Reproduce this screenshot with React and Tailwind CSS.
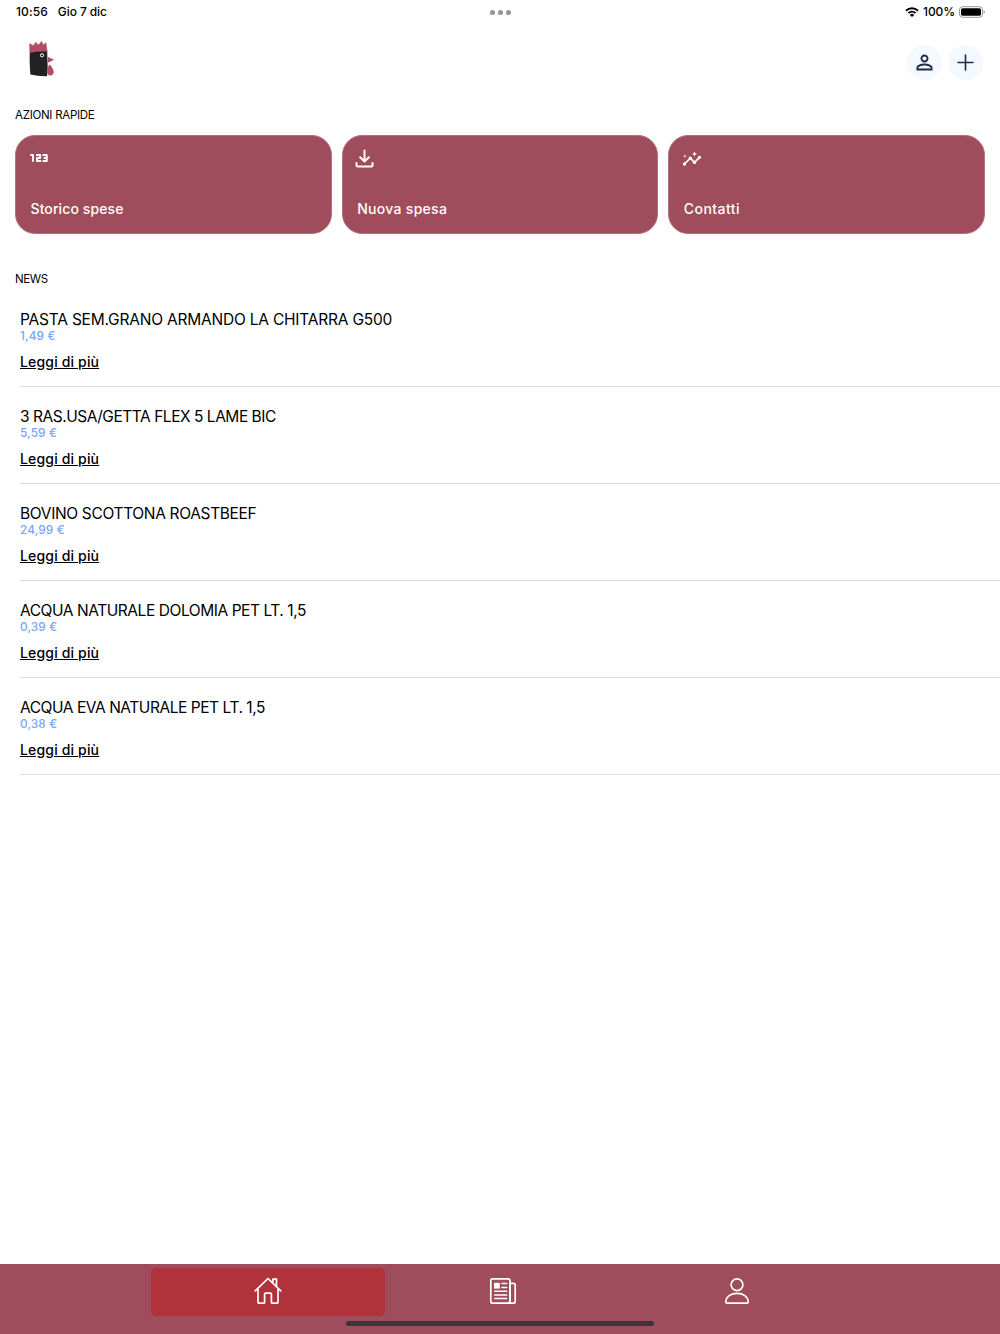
import React from 'react';
import { MdInsights, MdPersonOutline } from 'react-icons/md';

const actions = [
  { label: 'Storico spese', tracking: 'tracking-[0.1px]', Icon: NumbersIcon },
  { label: 'Nuova spesa', tracking: 'tracking-[0.3px]', Icon: DownloadIcon },
  { label: 'Contatti', tracking: 'tracking-[0.45px]', Icon: InsightsIcon },
];

const news = [
  { title: 'PASTA SEM.GRANO ARMANDO LA CHITARRA G500', price: '1,49 €', tracking: 'tracking-[-0.21px]' },
  { title: '3 RAS.USA/GETTA FLEX 5 LAME BIC', price: '5,59 €', tracking: 'tracking-[-0.47px]' },
  { title: 'BOVINO SCOTTONA ROASTBEEF', price: '24,99 €', tracking: 'tracking-[-0.34px]' },
  { title: 'ACQUA NATURALE DOLOMIA PET LT. 1,5', price: '0,39 €', tracking: 'tracking-[-0.44px]' },
  { title: 'ACQUA EVA NATURALE PET LT. 1,5', price: '0,38 €', tracking: 'tracking-[-0.45px]' },
];

function NumbersIcon() {
  return (
    <svg className="-ml-px mt-[2px] h-[8px] w-[18px]" viewBox="0 0 18 8" fill="none" stroke="currentColor" strokeWidth="1.9" strokeLinejoin="round" strokeLinecap="round">
      <path d="M1 1h2v6M6.8 1h3.4v3H7v3h3.4M13.2 1h3.6v6h-3.6M14.4 4h2.4" />
    </svg>
  );
}

function DownloadIcon() {
  return (
    <svg className="-ml-[2.2px] -mt-[3px] h-[19px] w-[19px]" viewBox="0 0 19 19" fill="none" stroke="currentColor" strokeWidth="2" strokeLinecap="round" strokeLinejoin="round">
      <path d="M9.5 1.5v10.6M5.1 8.3l4.4 4.2 4.4-4.2M1.5 14v2.3a1.2 1.2 0 0 0 1.2 1.2h13.6a1.2 1.2 0 0 0 1.2-1.2V14" />
    </svg>
  );
}

function InsightsIcon() {
  return <MdInsights className="-ml-[2px] -mt-[3px] h-5 w-5" />;
}

function Logo() {
  return (
    <svg className="h-[37px] w-[26px]" viewBox="0 0 26 37">
      <path d="M0.8 12 0.5 2.4 4.4 4.6 6.9 1.2 9.4 4 12.6 0.3 14.2 3.7 17 1.8 18.3 10.8Z" fill="#b24d66" stroke="#b24d66" strokeWidth="0.4" strokeLinejoin="round" />
      <path d="M19 16 25.2 18.8 19 21.8ZM19 27.5C19 24 20.8 22.2 22 25C24.6 28.6 25.6 31.5 23.8 33.6C22 35.4 19 34.4 18.4 32.5Z" fill="#b24d66" />
      <path d="M0.8 11.8Q9 10.2 18.2 10.6L18.7 27 18 35.2Q9 35.4 1.4 33.4Q0.3 21 0.8 11.8Z" fill="#222022" />
      <circle cx="13" cy="14.3" r="1.6" fill="#222022" stroke="#fff" strokeWidth="1" />
    </svg>
  );
}

function HomeIcon() {
  return (
    <svg className="h-7 w-7" viewBox="0 0 28 28" fill="none" stroke="currentColor" strokeWidth="1.7" strokeLinejoin="round" strokeLinecap="round">
      <path d="M1.2 13.8 14 1.5 26.8 13.8M18.9 5.8V2.1h3.6v7.2M4 11.2v14a1 1 0 0 0 1 1h4.6a1 1 0 0 0 1-1v-8a1 1 0 0 1 1-1h4.8a1 1 0 0 1 1 1v8a1 1 0 0 0 1 1H23a1 1 0 0 0 1-1v-14" />
    </svg>
  );
}

function NewsIcon() {
  return (
    <svg className="h-7 w-7" viewBox="0 0 28 28" fill="none" stroke="currentColor" strokeWidth="1.7" strokeLinejoin="round" strokeLinecap="round">
      <rect x="1.8" y="1.8" width="19.2" height="24.4" rx="1.8" />
      <path d="M21 6.3h3.4a1.8 1.8 0 0 1 1.8 1.8v16.3a1.8 1.8 0 0 1-1.8 1.8H18.4M21 6.3v18" />
      <rect x="5" y="5.8" width="5.8" height="5.8" fill="currentColor" stroke="none" />
      <path d="M12.9 6.6h4.8M12.9 10.5h4.8M5.7 14.2h12M5.7 18h12M5.7 21.6h12" strokeWidth="1.5" />
    </svg>
  );
}

function ProfileIcon() {
  return (
    <svg className="h-7 w-7" viewBox="0 0 28 28" fill="none" stroke="currentColor" strokeWidth="1.7" strokeLinejoin="round">
      <circle cx="14" cy="7.7" r="5.9" />
      <path d="M2.8 24.8c.2-5.2 5-8.4 11.2-8.4s11 3.2 11.2 8.4a1.4 1.4 0 0 1-1.4 1.4H4.2a1.4 1.4 0 0 1-1.4-1.4Z" />
    </svg>
  );
}

function StatusBar() {
  return (
    <div className="grid h-6 grid-cols-3 items-center pl-4 pr-[15px] text-[12px] font-medium leading-6 text-black">
      <div className="flex gap-[10px]">
        <span className="tracking-[0.1px]">10:56</span>
        <span className="tracking-[-0.1px]">Gio 7 dic</span>
      </div>
      <div className="flex justify-center gap-[3px]">
        <i className="h-[5px] w-[5px] rounded-full bg-[#949494]" />
        <i className="h-[5px] w-[5px] rounded-full bg-[#949494]" />
        <i className="h-[5px] w-[5px] rounded-full bg-[#949494]" />
      </div>
      <div className="flex items-center justify-end">
        <svg className="mr-1 h-[10px] w-[14px]" viewBox="0 0 14 10" fill="none" stroke="#000" strokeWidth="1.9">
          <path d="M1 3.7a8.6 8.6 0 0 1 12 0M3.4 6.2a5.1 5.1 0 0 1 7.2 0" />
          <path d="M7 9.9 4.9 7.9a3 3 0 0 1 4.2 0Z" fill="#000" stroke="none" />
        </svg>
        <span className="tracking-[-0.1px]">100%</span>
        <svg className="ml-1 h-3 w-[26px]" viewBox="0 0 26 12" fill="none">
          <rect x="0.5" y="0.7" width="23" height="10.6" rx="3.2" stroke="#999" />
          <rect x="2" y="2.2" width="20" height="7.6" rx="1.9" fill="#000" />
          <path d="M24.6 4.2q1.3.4 1.3 1.8t-1.3 1.8Z" fill="#999" />
        </svg>
      </div>
    </div>
  );
}

export default function App() {
  return (
    <div className="flex h-[1334px] w-[1000px] flex-col overflow-hidden bg-white font-['Inter',sans-serif] text-black">
      <StatusBar />
      <header className="flex h-[77px] items-center justify-between pl-[29px] pr-[17px]">
        <div className="-mt-[7px]"><Logo /></div>
        <div className="flex gap-[6px] text-[#202c47]">
          <button className="flex h-[35px] w-[35px] items-center justify-center rounded-full bg-[#f4f8ff]">
            <MdPersonOutline className="h-[24px] w-[24px] -translate-x-[0.5px] -translate-y-[0.5px]" />
          </button>
          <button className="flex h-[35px] w-[35px] items-center justify-center rounded-full bg-[#f4f8ff]">
            <svg className="h-[17px] w-[17px]" viewBox="0 0 17 17" fill="none" stroke="currentColor" strokeWidth="1.6" strokeLinecap="round">
              <path d="M8.5 1v15M1 8.5h15" />
            </svg>
          </button>
        </div>
      </header>

      <section className="px-[15px]">
        <h2 className="h-[34px] text-[11.5px] leading-[28px] tracking-[-0.27px]">AZIONI RAPIDE</h2>
        <div className="grid grid-cols-3 gap-[10px]">
          {actions.map(({ label, tracking, Icon }) => (
            <div key={label} className="flex h-[99px] flex-col justify-between rounded-[20px] border border-[#b5707e] bg-[#9f4c5c] pb-[14px] pl-[14.5px] pt-4 text-white">
              <Icon />
              <span className={`text-[14px] font-medium leading-5 ${tracking}`}>{label}</span>
            </div>
          ))}
        </div>
      </section>

      <section className="flex-1 pt-[32px]">
        <h2 className="h-[24px] pl-[15px] text-[11.5px] leading-[26px] tracking-[-0.4px]">NEWS</h2>
        <ul className="pl-5">
          {news.map(({ title, price, tracking }) => (
            <li key={title} className="h-[97.1px] border-b border-[#dedede] pt-[20px]">
              <h3 className={`text-[15.5px] leading-[20px] ${tracking}`}>{title}</h3>
              <p className="-mt-px text-[11.8px] font-medium leading-[14px] tracking-[0.12px] text-[#7ba4fb]">{price}</p>
              <a className="mt-[9px] block text-[14px] font-medium leading-[20px] tracking-[0.16px] underline">Leggi di più</a>
            </li>
          ))}
        </ul>
      </section>

      <nav className="relative flex h-[70px] justify-center bg-[#9f4c5c] pl-[4px] pt-[3.5px] text-white">
        <div className="flex h-[48px] w-[234px] items-center justify-center rounded-[5px] bg-[#b0333c] pb-px"><HomeIcon /></div>
        <div className="flex h-[48px] w-[234px] items-center justify-center pb-px pl-px"><NewsIcon /></div>
        <div className="flex h-[48px] w-[234px] items-center justify-center pb-px pl-px"><ProfileIcon /></div>
        <div className="absolute bottom-[8px] left-[346px] h-[5px] w-[308px] rounded-full bg-[#373737]" />
      </nav>
    </div>
  );
}
